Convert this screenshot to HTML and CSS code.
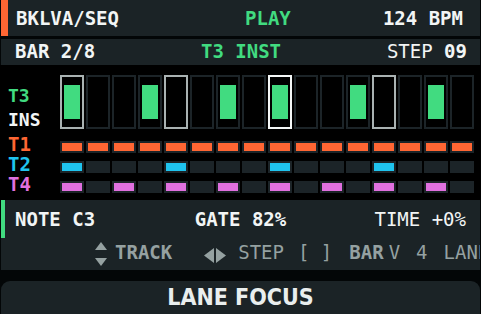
FILE: index.html
```html
<html>
<head>
<meta http-equiv="Content-Type" content="text/html; charset=utf-8">
<title>BKLVA/SEQ</title>
<link rel="stylesheet" href="styles.css">
</head>
<body>
<div class="screen">
	<div class="topbar">
		<span>BKLVA/SEQ</span>
		<span class="green">PLAY</span>
		<span>124 BPM</span>
	</div>
	<div class="subbar">
		<span>BAR 2/8</span>
		<span class="green">T3 INST</span>
		<span><span class="thin">STEP</span> 09</span>
	</div>
	<div class="seq" id="seq">
		<div class="lbl lbl-step"><span class="green">T3</span><br>INS</div>
	</div>
	<div class="info">
		<div class="info-row">
			<span>NOTE C3</span>
			<span>GATE 82%</span>
			<span class="thin">TIME +0%</span>
		</div>
		<div class="hints">
			<svg class="ico-ud" width="12" height="24" viewBox="0 0 12 24"><polygon points="6,0 12,8 0,8"/><polygon points="0,16 12,16 6,24"/></svg>
			<span class="h-track">TRACK</span>
			<svg class="ico-lr" width="24" height="16" viewBox="0 0 24 16"><polygon points="11,0 11,15 1,7.5"/><polygon points="13,0 23,7.5 13,15"/></svg>
			<span class="h-step thin">STEP</span>
			<span class="h-key thin">[ ]</span>
			<span class="h-bar">BAR</span>
			<span class="h-key2 thin">V</span>
			<span class="h-four thin">4</span>
			<span class="h-lane thin">LANE</span>
		</div>
	</div>
	<div class="footer">LANE FOCUS</div>
</div>
<script type="text/javascript">
window.onload=function(){
	var seq=document.getElementById('seq');
	var t3=[0,3,6,8,11,14];
	var lanes=[
		{name:'T1',cls:'orange',on:[0,1,2,3,4,5,6,7,8,9,10,11,12,13,14,15]},
		{name:'T2',cls:'blue',on:[0,4,8,12]},
		{name:'T4',cls:'pink',on:[0,2,4,6,8,10,12,14]}
	];
	for(var i=0;i<16;i++){
		var c=document.createElement('div');
		c.className='step';
		if(i==0||i==4||i==12) c.className+=' beat';
		if(i==8) c.className+=' cur';
		if(t3.indexOf(i)>=0) c.innerHTML='<b></b>';
		seq.appendChild(c);
	}
	for(var l=0;l<lanes.length;l++){
		var lb=document.createElement('div');
		lb.className='lbl lbl-lane '+lanes[l].cls;
		lb.innerHTML=lanes[l].name;
		seq.appendChild(lb);
		for(var j=0;j<16;j++){
			var p=document.createElement('div');
			p.className='pad';
			if(lanes[l].on.indexOf(j)>=0) p.innerHTML='<b class="'+lanes[l].cls+'-bg"></b>';
			seq.appendChild(p);
		}
	}
}
</script>
</body>
</html>
```
FILE: styles.css
```css
body{
	margin:0;
	background:#030607;
	overflow:hidden;
}
.screen{
	width:481px;
	height:314px;
	padding:0 1px;
	box-sizing:border-box;
	font-family:"DejaVu Sans Mono","Liberation Mono",monospace;
	font-size:19px;
	font-weight:bold;
	color:#f2f5f5;
	overflow:hidden;
}
.green{color:#41db80;}
.orange{color:#ff6633;}
.blue{color:#1fc3ee;}
.pink{color:#e070df;}
.thin{font-weight:normal;}

.topbar{
	display:grid;
	grid-template-columns:229px 1fr auto;
	height:36px;
	line-height:36px;
	background:#1b2326;
	border-left:7px solid #ff6633;
	padding:0 17px 0 8px;
}
.subbar{
	display:grid;
	grid-template-columns:1fr auto 1fr;
	margin-top:3px;
	height:26px;
	line-height:24px;
	background:#1b2326;
	padding:0 13px 2px 14px;
	box-sizing:border-box;
}
.subbar > span:last-child,.info-row span:last-child{
	justify-self:end;
}
.seq{
	display:grid;
	grid-template-columns:50px repeat(16,24px);
	grid-template-rows:58px 12px 12px 12px;
	column-gap:2px;
	row-gap:8px;
	padding:10px 0 7px 8px;
	background:#000;
	margin:0 -1px;
}
.lbl-step{
	line-height:24px;
	padding-top:9px;
	font-size:18px;
}
.lbl-lane{
	line-height:12px;
	margin-top:-3px;
}
.step{
	width:24px;
	height:54px;
	box-sizing:border-box;
	border:2px solid #1c2428;
	background:#000;
	padding:8px 2px;
}
.step.beat{border-color:#a9b2b2;}
.step.cur{border-color:#f4f7f7;}
.step b{
	display:block;
	height:34px;
	background:#41db80;
}
.pad{
	width:24px;
	height:12px;
	box-sizing:border-box;
	background:#1c2428;
	padding:2px;
}
.pad b{
	display:block;
	height:8px;
}
.orange-bg{background:#ff6633;}
.blue-bg{background:#1fc3ee;}
.pink-bg{background:#e070df;}

.info{
	background:#1b2326;
}
.info-row{
	display:grid;
	grid-template-columns:1fr auto 1fr;
	height:38px;
	line-height:38px;
	border-left:4px solid #41db80;
	padding:0 14px 0 10px;
}
.hints{
	display:flex;
	align-items:flex-start;
	height:32px;
	line-height:28px;
	padding-left:94px;
	color:#95a1a1;
	white-space:nowrap;
	overflow:hidden;
}
.hints svg{fill:#95a1a1;flex:none;}
.ico-ud{margin-top:4px;}
.ico-lr{margin:10px 0 0 31px;}
.h-track{margin-left:8px;}
.h-step{margin-left:11px;}
.h-key{margin-left:14px;}
.h-bar{margin-left:17px;}
.h-key2{margin-left:5px;}
.h-four{margin-left:16px;}
.h-lane{margin-left:16px;}

.footer{
	margin-top:11px;
	height:44px;
	line-height:33px;
	border-radius:9px 9px 0 0;
	background:#1b2326;
	text-align:center;
	font-family:"DejaVu Sans Condensed","DejaVu Sans",sans-serif;
	font-stretch:condensed;
	font-size:23px;
	font-weight:bold;
	color:#e9eeee;
}
```
